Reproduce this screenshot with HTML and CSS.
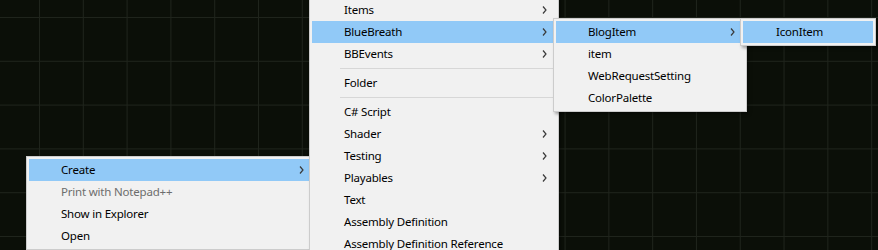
FILE: index.html
```html
<!DOCTYPE html>
<html lang="en">
<head>
    <meta charset="UTF-8">
    <title>Context Menu</title>
    <link rel="stylesheet" href="styles.css">
</head>
<body>
    <div class="menu menu-root">
        <div class="item active">Create<svg class="arrow" viewBox="0 0 5 8"><polyline points="1,0.5 4,4 1,7.5"/></svg></div>
        <div class="item disabled">Print with Notepad++</div>
        <div class="item">Show in Explorer</div>
        <div class="item">Open</div>
    </div>

    <div class="menu menu-create">
        <div class="item">Items<svg class="arrow" viewBox="0 0 5 8"><polyline points="1,0.5 4,4 1,7.5"/></svg></div>
        <div class="item active">BlueBreath<svg class="arrow" viewBox="0 0 5 8"><polyline points="1,0.5 4,4 1,7.5"/></svg></div>
        <div class="item">BBEvents<svg class="arrow" viewBox="0 0 5 8"><polyline points="1,0.5 4,4 1,7.5"/></svg></div>
        <div class="sep"></div>
        <div class="item">Folder</div>
        <div class="sep"></div>
        <div class="item">C# Script</div>
        <div class="item">Shader<svg class="arrow" viewBox="0 0 5 8"><polyline points="1,0.5 4,4 1,7.5"/></svg></div>
        <div class="item">Testing<svg class="arrow" viewBox="0 0 5 8"><polyline points="1,0.5 4,4 1,7.5"/></svg></div>
        <div class="item">Playables<svg class="arrow" viewBox="0 0 5 8"><polyline points="1,0.5 4,4 1,7.5"/></svg></div>
        <div class="item">Text</div>
        <div class="item">Assembly Definition</div>
        <div class="item">Assembly Definition Reference</div>
    </div>

    <div class="menu menu-bb">
        <div class="item active">BlogItem<svg class="arrow" viewBox="0 0 5 8"><polyline points="1,0.5 4,4 1,7.5"/></svg></div>
        <div class="item">item</div>
        <div class="item">WebRequestSetting</div>
        <div class="item">ColorPalette</div>
    </div>

    <div class="menu menu-blog">
        <div class="item active">IconItem</div>
    </div>
</body>
</html>
```

FILE: styles.css
```css
html, body {
    height: 100%;
}
body {
    margin: 0;
    position: relative;
    overflow: hidden;
    font-family: 'Noto Sans', 'Open Sans', sans-serif;
    font-size: 11.5px;
    letter-spacing: -0.2px;
    color: #000;
    background-color: #0b0f08;
    background-image:
        linear-gradient(to right, #1f241c 1px, transparent 1px),
        linear-gradient(to bottom, #1f241c 1px, transparent 1px);
    background-size: 43.8px 43.8px;
    background-position: 39px 17px;
}
.menu {
    position: absolute;
    box-sizing: border-box;
    background: #f1f1f1;
    border: 1px solid #cccccc;
    padding: 2px;
    box-shadow: 2px 2px 3px rgba(0, 0, 0, 0.35);
}
.menu-root {
    left: 26px;
    top: 156px;
    width: 290px;
    z-index: 1;
}
.menu-create {
    left: 309px;
    top: -4px;
    width: 250px;
    z-index: 2;
}
.menu-bb {
    left: 553px;
    top: 18px;
    width: 194px;
    z-index: 3;
}
.menu-blog {
    left: 740px;
    top: 18px;
    width: 136px;
    z-index: 4;
}
.item {
    box-sizing: border-box;
    height: 22px;
    display: flex;
    align-items: center;
    padding: 0 9px 1px 32px;
    white-space: nowrap;
}
.item.active {
    background: #91c9f7;
}
.item.disabled {
    color: #6d6d6d;
}
.menu-blog .item {
    padding-left: 33px;
}
.arrow {
    width: 5px;
    height: 8px;
    margin-left: auto;
    fill: none;
    stroke: #3a3a3a;
    stroke-width: 1.2;
}
.sep {
    height: 7px;
    display: flex;
    align-items: center;
    padding-left: 28px;
}
.sep::before {
    content: "";
    flex: 1;
    height: 1px;
    background: #d7d7d7;
}
```
